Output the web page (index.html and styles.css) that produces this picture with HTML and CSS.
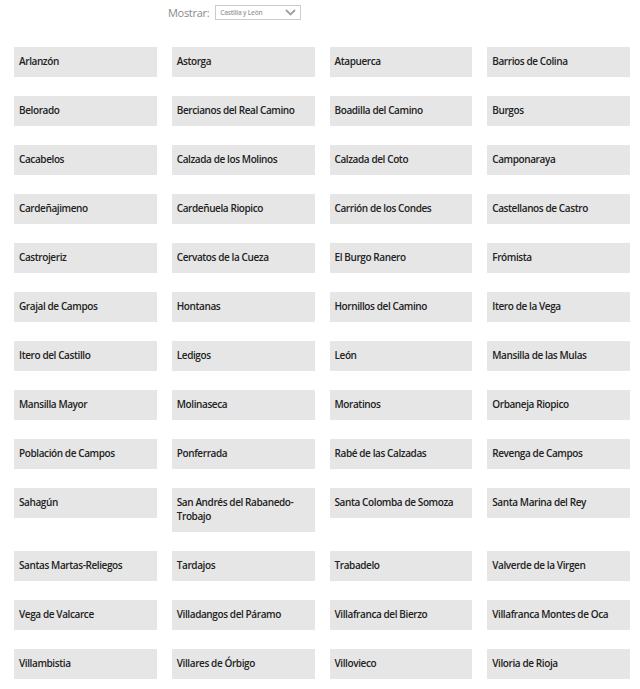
FILE: index.html
```html
<!DOCTYPE html>
<html lang="es">
<head>
<meta charset="UTF-8">
<meta name="viewport" content="width=device-width, initial-scale=1.0">
<title>Localidades</title>
<link rel="stylesheet" href="styles.css">
</head>
<body>

<div id="filter">
    <label for="region">Mostrar:</label>
    <div class="select">
        <span>Castilla y León</span>
        <svg width="11" height="7" viewBox="0 0 11 7"><path d="M1 1 L5.5 5.5 L10 1" fill="none" stroke="#a0a0a0" stroke-width="1.8"/></svg>
    </div>
</div>

<ul id="towns">
    <li class="town">Arlanzón</li>
    <li class="town">Astorga</li>
    <li class="town">Atapuerca</li>
    <li class="town">Barrios de Colina</li>
    <li class="town">Belorado</li>
    <li class="town">Bercianos del Real Camino</li>
    <li class="town">Boadilla del Camino</li>
    <li class="town">Burgos</li>
    <li class="town">Cacabelos</li>
    <li class="town">Calzada de los Molinos</li>
    <li class="town">Calzada del Coto</li>
    <li class="town">Camponaraya</li>
    <li class="town">Cardeñajimeno</li>
    <li class="town">Cardeñuela Riopico</li>
    <li class="town">Carrión de los Condes</li>
    <li class="town">Castellanos de Castro</li>
    <li class="town">Castrojeriz</li>
    <li class="town">Cervatos de la Cueza</li>
    <li class="town">El Burgo Ranero</li>
    <li class="town">Frómista</li>
    <li class="town">Grajal de Campos</li>
    <li class="town">Hontanas</li>
    <li class="town">Hornillos del Camino</li>
    <li class="town">Itero de la Vega</li>
    <li class="town">Itero del Castillo</li>
    <li class="town">Ledigos</li>
    <li class="town">León</li>
    <li class="town">Mansilla de las Mulas</li>
    <li class="town">Mansilla Mayor</li>
    <li class="town">Molinaseca</li>
    <li class="town">Moratinos</li>
    <li class="town">Orbaneja Riopico</li>
    <li class="town">Población de Campos</li>
    <li class="town">Ponferrada</li>
    <li class="town">Rabé de las Calzadas</li>
    <li class="town">Revenga de Campos</li>
    <li class="town">Sahagún</li>
    <li class="town">San Andrés del Rabanedo-Trobajo</li>
    <li class="town">Santa Colomba de Somoza</li>
    <li class="town">Santa Marina del Rey</li>
    <li class="town">Santas Martas-Reliegos</li>
    <li class="town">Tardajos</li>
    <li class="town">Trabadelo</li>
    <li class="town">Valverde de la Virgen</li>
    <li class="town">Vega de Valcarce</li>
    <li class="town">Villadangos del Páramo</li>
    <li class="town">Villafranca del Bierzo</li>
    <li class="town">Villafranca Montes de Oca</li>
    <li class="town">Villambistia</li>
    <li class="town">Villares de Órbigo</li>
    <li class="town">Villovieco</li>
    <li class="town">Viloria de Rioja</li>
</ul>

</body>
</html>
```

FILE: styles.css
```css
body {
    font-family: "Open Sans", "DejaVu Sans", sans-serif;
    margin: 0;
    padding: 0;
    background-color: #fff;
    color: #222;
}
#filter {
    display: flex;
    align-items: center;
    gap: 6px;
    height: 15px;
    padding: 5px 0 0 168px;
}
#filter label {
    font-size: 11px;
    letter-spacing: -0.3px;
    color: #8a8a8a;
}
.select {
    display: flex;
    align-items: center;
    justify-content: space-between;
    box-sizing: border-box;
    width: 86px;
    height: 15px;
    padding: 0 4px 0 4px;
    border: 1px solid #ccc;
    background-color: #fff;
}
.select span {
    font-size: 6.5px;
    font-weight: 600;
    letter-spacing: -0.2px;
    color: #9a9a9a;
}
#towns {
    list-style-type: none;
    margin: 0;
    padding: 27px 10px 0 14px;
    display: grid;
    grid-template-columns: repeat(4, 1fr);
    gap: 19px 15px;
    align-items: start;
}
.town {
    background-color: #e6e6e6;
    padding: 7px 3px 9px 5px;
    font-size: 10px;
    font-weight: 600;
    line-height: 14px;
    letter-spacing: -0.4px;
}
```
